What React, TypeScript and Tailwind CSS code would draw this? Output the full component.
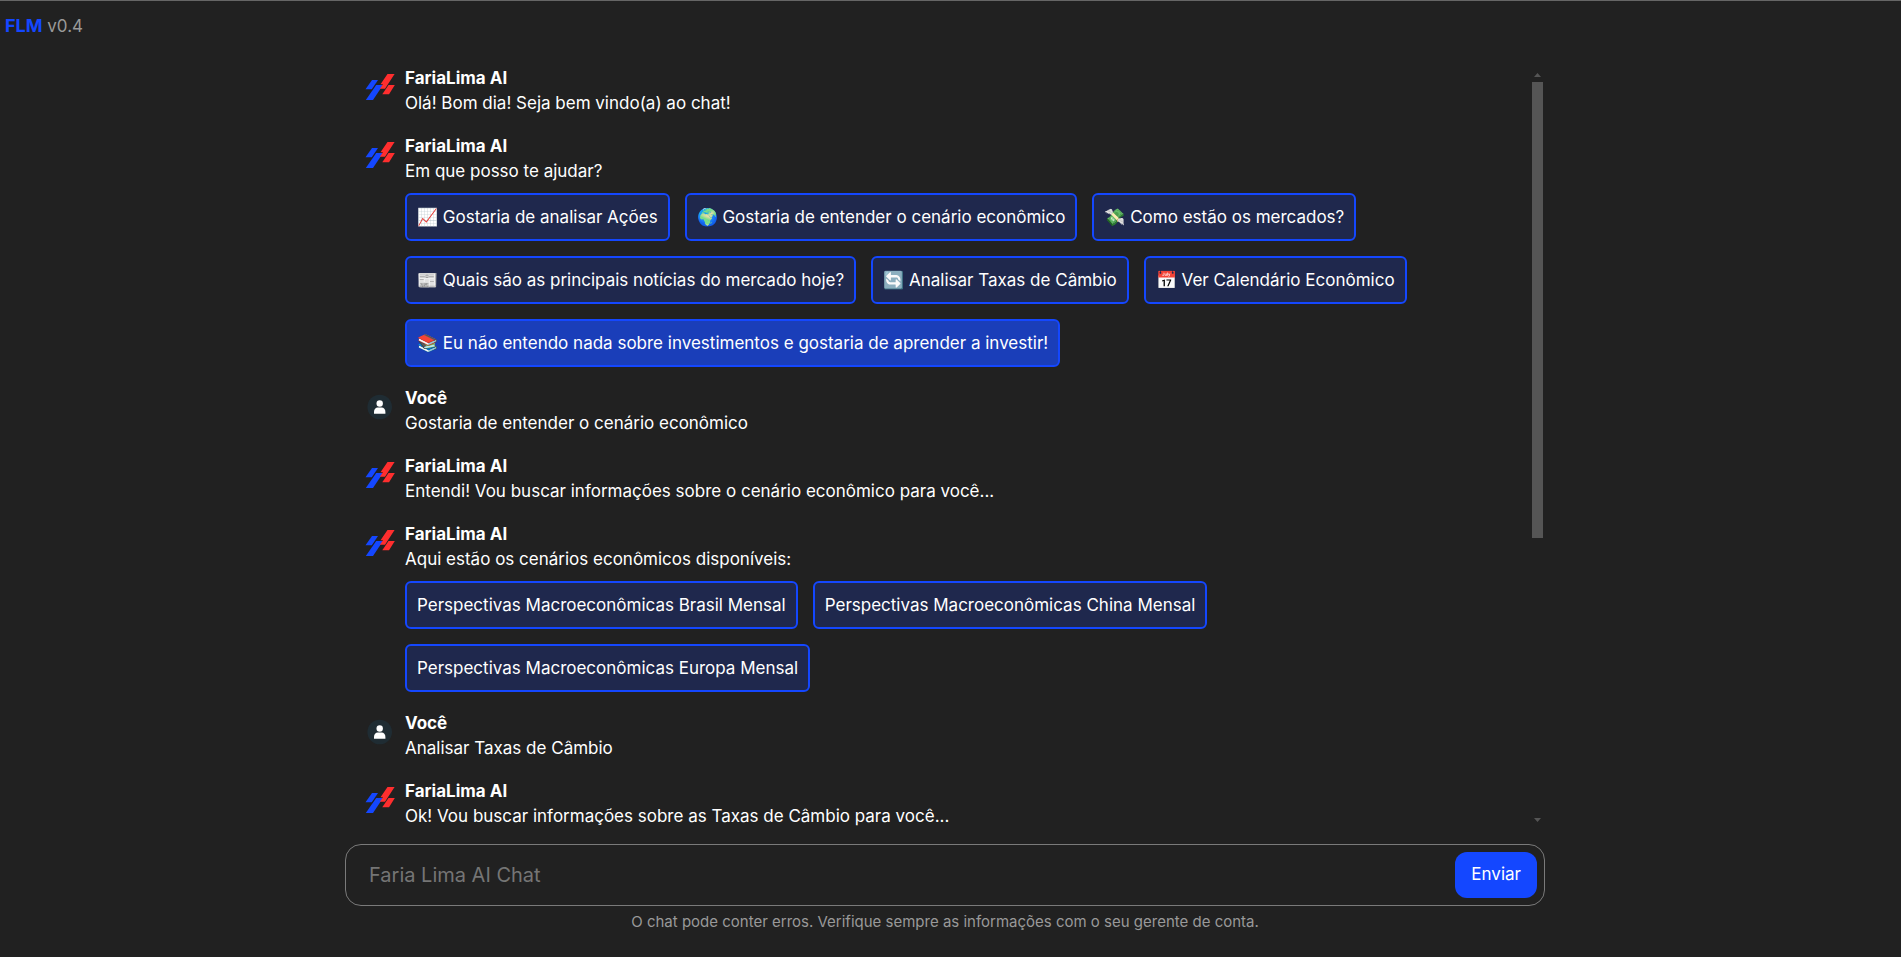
import React from "react";

function Logo() {
  return (
    <svg viewBox="0 0 30 28" className="mt-[7px] h-7 w-[30px] shrink-0" role="img" aria-label="FariaLima AI">
      <g fill="#1447ff">
        <path d="M7 7H13L6.800 16.300H0.500Z" />
        <path d="M11.200 12H18L8 27H0.800Z" />
      </g>
      <g fill="#ff2e2e">
        <path d="M22.500 1H29.600L20 15.700H14.800L18 11.200H15.500Z" />
        <path d="M23.500 12H29.800L24 21.200H17.300Z" />
      </g>
    </svg>
  );
}

function UserAvatar() {
  return (
    <svg viewBox="0 0 30 28" className="mt-[7px] h-7 w-[30px] shrink-0" role="img" aria-label="Você">
      <circle cx="14.700" cy="14" r="12.300" fill="#1f2c33" />
      <circle cx="14.700" cy="10.500" r="3.200" fill="#fff" />
      <path d="M9 20.800V19C9 16 10.700 14.400 12.700 14.400H16.700C18.700 14.400 20.400 16 20.400 19V20.800Z" fill="#fff" />
    </svg>
  );
}

type Option = { label: string; highlighted?: boolean };
type Message = { author: "FariaLima AI" | "Você"; text: string; options?: Option[] };

const messages: Message[] = [
  { author: "FariaLima AI", text: "Olá! Bom dia! Seja bem vindo(a) ao chat!" },
  {
    author: "FariaLima AI",
    text: "Em que posso te ajudar?",
    options: [
      { label: "📈 Gostaria de analisar Ações" },
      { label: "🌍 Gostaria de entender o cenário econômico" },
      { label: "💸 Como estão os mercados?" },
      { label: "📰 Quais são as principais notícias do mercado hoje?" },
      { label: "🔄 Analisar Taxas de Câmbio" },
      { label: "📅 Ver Calendário Econômico" },
      { label: "📚 Eu não entendo nada sobre investimentos e gostaria de aprender a investir!", highlighted: true },
    ],
  },
  { author: "Você", text: "Gostaria de entender o cenário econômico" },
  { author: "FariaLima AI", text: "Entendi! Vou buscar informações sobre o cenário econômico para você..." },
  {
    author: "FariaLima AI",
    text: "Aqui estão os cenários econômicos disponíveis:",
    options: [
      { label: "Perspectivas Macroeconômicas Brasil Mensal" },
      { label: "Perspectivas Macroeconômicas China Mensal" },
      { label: "Perspectivas Macroeconômicas Europa Mensal" },
    ],
  },
  { author: "Você", text: "Analisar Taxas de Câmbio" },
  { author: "FariaLima AI", text: "Ok! Vou buscar informações sobre as Taxas de Câmbio para você..." },
];

function ChatMessage({ author, text, options }: Message) {
  return (
    <li className="flex gap-[10px]">
      {author === "Você" ? <UserAvatar /> : <Logo />}
      <div className="min-w-0 flex-1">
        <h2 className="leading-[25px] font-bold">{author}</h2>
        <p className="leading-6">{text}</p>
        {options && (
          <div className="mt-[10px] flex max-w-[1050px] flex-wrap gap-[15px]">
            {options.map((o) => (
              <button
                key={o.label}
                type="button"
                className={`rounded-md border-2 border-[#1447ff] px-[10px] py-[10px] leading-6 ${
                  o.highlighted ? "bg-[#1a3eb9]" : "bg-[#1f284d]"
                }`}
              >
                {o.label}
              </button>
            ))}
          </div>
        )}
      </div>
    </li>
  );
}

function ScrollTrack() {
  return (
    <div aria-hidden="true" className="flex w-4 shrink-0 flex-col items-center pt-2 pb-[6px]">
      <svg viewBox="0 0 7 4" className="mb-[5px] h-1 w-[7px]">
        <path d="M3.500 0L7 4H0Z" fill="#555" />
      </svg>
      <div className="flex w-[11px] flex-1 flex-col">
        <div className="h-[62%] bg-[#555]" />
      </div>
      <svg viewBox="0 0 7 4" className="h-1 w-[7px]">
        <path d="M0 0H7L3.500 4Z" fill="#555" />
      </svg>
    </div>
  );
}

export default function App() {
  return (
    <div className="flex min-h-screen flex-col border-t border-[#666] bg-[#212121] pr-[11px] font-[Inter,'Noto_Sans',sans-serif] text-[17px] text-white">
      <header className="px-[5px] pt-[11px] leading-7 text-[#999]">
        <strong className="text-lg font-bold text-[#1447ff]">FLM</strong> v0.4
      </header>
      <main className="mx-auto mt-[25px] w-full max-w-[1200px]">
        <section className="flex" aria-label="Conversa">
          <ul className="flex flex-1 flex-col gap-[19px] pt-px pl-5">
            {messages.map((m, i) => (
              <ChatMessage key={i} {...m} />
            ))}
          </ul>
          <ScrollTrack />
        </section>
        <form
          className="mt-4 flex h-[62px] items-center rounded-2xl border border-[#7a7a7a] pr-[7px] pl-[23px]"
          onSubmit={(e) => e.preventDefault()}
        >
          <input
            aria-label="Mensagem"
            placeholder="Faria Lima AI Chat"
            className="min-w-0 flex-1 bg-transparent text-xl outline-none placeholder:text-[#757575]"
          />
          <button type="submit" className="h-[46px] rounded-xl bg-[#1447ff] px-4">
            Enviar
          </button>
        </form>
        <p className="mt-1 text-center text-[15px] leading-6 text-[#999]">
          O chat pode conter erros. Verifique sempre as informações com o seu gerente de conta.
        </p>
      </main>
    </div>
  );
}
